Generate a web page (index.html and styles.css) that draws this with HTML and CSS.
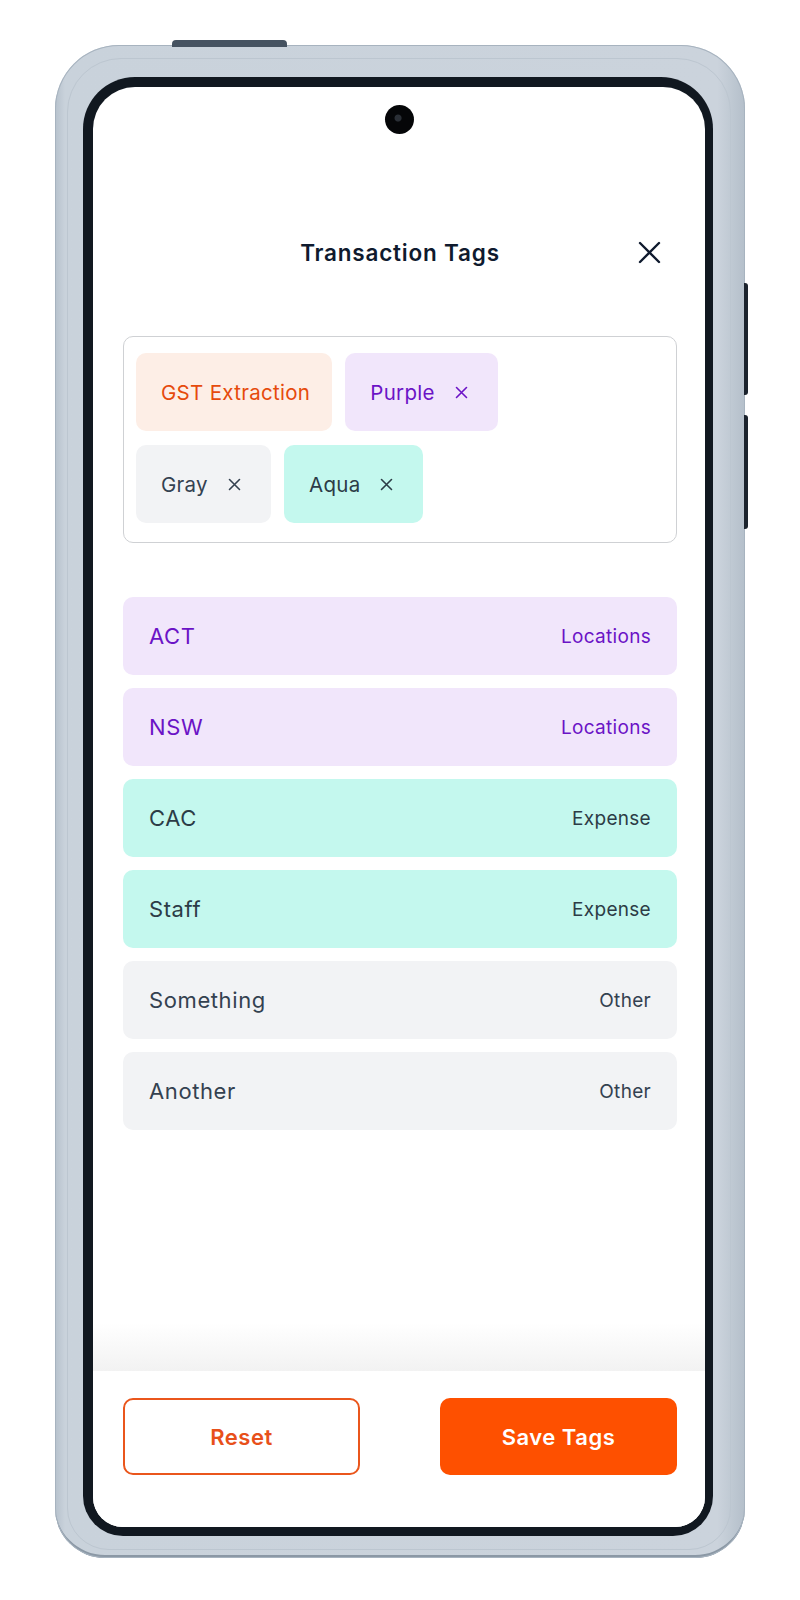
FILE: index.html
```html
<!DOCTYPE html>
<html lang="en">
<head>
<meta charset="utf-8">
<title>Transaction Tags</title>
<link rel="stylesheet" href="styles.css">
</head>
<body>
<div class="phone">
  <span class="btn-top"></span>
  <span class="btn-side btn-side-1"></span>
  <span class="btn-side btn-side-2"></span>
  <div class="bezel">
    <div class="screen">
      <div class="camera"></div>
      <div class="content">
        <header class="header">
          <span></span>
          <h1 class="title">Transaction Tags</h1>
          <button class="close" aria-label="Close">
            <svg width="23" height="23" viewBox="0 0 23 23"><path d="M2 2 L21 21 M21 2 L2 21" stroke="#0f1a2e" stroke-width="2.4" stroke-linecap="round" fill="none"/></svg>
          </button>
        </header>

        <div class="selected">
          <span class="chip chip-peach">GST Extraction</span>
          <span class="chip chip-purple">Purple<svg class="x" width="13" height="13" viewBox="0 0 13 13"><path d="M1.5 1.5 L11.5 11.5 M11.5 1.5 L1.5 11.5" stroke="currentColor" stroke-width="1.6" stroke-linecap="round" fill="none"/></svg></span>
          <span class="chip chip-gray">Gray<svg class="x" width="13" height="13" viewBox="0 0 13 13"><path d="M1.5 1.5 L11.5 11.5 M11.5 1.5 L1.5 11.5" stroke="currentColor" stroke-width="1.6" stroke-linecap="round" fill="none"/></svg></span>
          <span class="chip chip-aqua">Aqua<svg class="x" width="13" height="13" viewBox="0 0 13 13"><path d="M1.5 1.5 L11.5 11.5 M11.5 1.5 L1.5 11.5" stroke="currentColor" stroke-width="1.6" stroke-linecap="round" fill="none"/></svg></span>
        </div>

        <ul class="list">
          <li class="row row-purple"><span class="name">ACT</span><span class="group">Locations</span></li>
          <li class="row row-purple"><span class="name">NSW</span><span class="group">Locations</span></li>
          <li class="row row-aqua"><span class="name">CAC</span><span class="group">Expense</span></li>
          <li class="row row-aqua"><span class="name">Staff</span><span class="group">Expense</span></li>
          <li class="row row-gray"><span class="name">Something</span><span class="group">Other</span></li>
          <li class="row row-gray"><span class="name">Another</span><span class="group">Other</span></li>
        </ul>
      </div>
      <div class="fade"></div>
      <footer class="footer">
        <button class="button button-outline">Reset</button>
        <button class="button button-solid">Save Tags</button>
      </footer>
    </div>
  </div>
</div>
</body>
</html>
```

FILE: styles.css
```css
* { box-sizing: border-box; }

html, body {
  margin: 0;
  padding: 0;
  background: #ffffff;
}

body {
  width: 800px;
  height: 1600px;
  font-family: "Inter", "Noto Sans", sans-serif;
  overflow: hidden;
}

.phone {
  position: relative;
  margin: 45px 0 0 55px;
  width: 690px;
  height: 1513px;
  padding: 32px 32px 22px 28px;
  border-radius: 64px 64px 50px 50px;
  background: linear-gradient(90deg, #b6c1cc 0px, #c9d2db 10px, #cbd3dc 96%, #b4bfca 100%);
  box-shadow: inset 0 0 0 1px #a7b3bf, inset 0 -3px 0 #8b98a5;
}

.phone::before {
  content: "";
  position: absolute;
  inset: 13px 14px 8px 12px;
  border-radius: 54px 54px 42px 42px;
  border: 1px solid #bcc6d0;
  pointer-events: none;
}

.btn-top {
  position: absolute;
  left: 117px;
  top: -5px;
  width: 115px;
  height: 7px;
  border-radius: 4px 4px 0 0;
  background: #465361;
}

.btn-side {
  position: absolute;
  right: -3px;
  width: 4px;
  border-radius: 0 3px 3px 0;
  background: #1b232d;
}
.btn-side-1 { top: 238px; height: 112px; }
.btn-side-2 { top: 370px; height: 114px; }

.bezel {
  position: relative;
  height: 100%;
  padding: 10px 8px 9px 10px;
  border-radius: 52px 52px 40px 40px;
  background: #111820;
}

.screen {
  height: 100%;
  display: flex;
  flex-direction: column;
  background: #ffffff;
  border-radius: 42px 42px 30px 30px;
  overflow: hidden;
}

.camera {
  flex: none;
  align-self: center;
  margin-top: 18px;
  width: 29px;
  height: 29px;
  border-radius: 50%;
  background: radial-gradient(circle at 45% 45%, #2a2f36 0 3px, #050608 4px);
}

.content {
  flex: 1;
  padding: 0 28px 0 30px;
}

.header {
  margin-top: 96px;
  height: 44px;
  display: grid;
  grid-template-columns: 1fr auto 1fr;
  align-items: center;
}

.title {
  margin: 0;
  font-size: 22.5px;
  font-weight: 600;
  color: #0f1a2e;
  letter-spacing: 0.8px;
}

.close {
  justify-self: end;
  margin-right: 16px;
  padding: 0;
  border: 0;
  background: none;
  width: 23px;
  height: 23px;
  display: flex;
}

.selected {
  margin-top: 62px;
  min-height: 206px;
  padding: 16px 40px 19px 12px;
  border: 1px solid #cfd1d4;
  border-radius: 10px;
  display: flex;
  flex-wrap: wrap;
  align-content: flex-start;
  gap: 14px 13px;
}

.chip {
  height: 78px;
  display: inline-flex;
  align-items: center;
  gap: 20px;
  padding: 0 30px 0 25px;
  border-radius: 10px;
  font-size: 20.5px;
  font-weight: 400;
  letter-spacing: 0.3px;
}
.chip-peach { background: #fdeee6; color: #e64a0c; padding-right: 22px; }
.chip-purple { background: #f1e6fb; color: #6b13c6; }
.chip-gray { background: #f2f3f5; color: #344150; }
.chip-aqua { background: #c4f8ee; color: #2c3c46; }

.x { flex: none; }

.list {
  list-style: none;
  margin: 54px 0 0 0;
  padding: 0;
  display: flex;
  flex-direction: column;
  gap: 13px;
}

.row {
  height: 78px;
  display: flex;
  align-items: center;
  justify-content: space-between;
  padding: 0 26px;
  border-radius: 10px;
}

.name {
  font-size: 22px;
  font-weight: 400;
  letter-spacing: 0.6px;
}

.group {
  font-size: 19px;
  font-weight: 400;
  letter-spacing: 0.3px;
}

.row-purple { background: #f1e6fb; color: #6b13c6; }
.row-aqua { background: #c4f8ee; color: #2c3c46; }
.row-gray { background: #f2f3f5; color: #344150; }

.fade {
  flex: none;
  height: 48px;
  background: linear-gradient(180deg, rgba(242, 242, 242, 0) 0%, #f2f2f2 100%);
}

.footer {
  flex: none;
  height: 156px;
  padding: 27px 28px 0 30px;
  display: flex;
  justify-content: space-between;
  align-items: flex-start;
  background: #ffffff;
}

.button {
  width: 237px;
  height: 77px;
  border-radius: 10px;
  font-family: "Inter", "Noto Sans", sans-serif;
  font-size: 22px;
  font-weight: 600;
  letter-spacing: 0.5px;
  cursor: pointer;
}

.button-outline {
  background: #ffffff;
  border: 2px solid #ea561c;
  color: #e8501a;
}

.button-solid {
  background: #fe5000;
  border: 0;
  color: #ffffff;
}
```
